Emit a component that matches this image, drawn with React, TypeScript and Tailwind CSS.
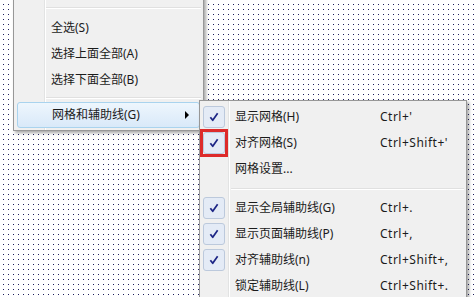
import React from 'react';

const FONT = { fontFamily: '"Noto Sans", "Noto Sans CJK SC", sans-serif' };

function Check() {
  return (
    <svg width="22" height="22" viewBox="0 0 22 22">
      <path d="M7 11.2 L9.6 14.6 L15 6.8" fill="none" stroke="#1c2585" strokeWidth="1.9" strokeLinejoin="round" />
    </svg>
  );
}

function CheckBox({ marked }: { marked?: boolean }) {
  return (
    <div className="relative ml-px w-[22px] h-[22px]">
      <div className="w-full h-full rounded-[3px] border border-[#bcc9dc] bg-[#e4ebf6] flex items-center justify-center">
        <Check />
      </div>
      {marked && <div className="absolute -inset-[3px] border-[3px] border-[#dd2b2b]" />}
    </div>
  );
}

function Separator({ left, top, bottom }: { left: string; top: string; bottom: string }) {
  return (
    <div className={`${top} ${bottom}`}>
      <div className={`${left} h-px bg-[#e0e0e0]`} />
      <div className={`${left} h-px bg-white`} />
    </div>
  );
}

const subItems = [
  { label: '显示网格(H)', key: "Ctrl+'", check: true },
  { label: '对齐网格(S)', key: "Ctrl+Shift+'", check: true, marked: true },
  { label: '网格设置...', key: '' },
  null,
  { label: '显示全局辅助线(G)', key: 'Ctrl+.', check: true },
  { label: '显示页面辅助线(P)', key: 'Ctrl+,', check: true },
  { label: '对齐辅助线(n)', key: 'Ctrl+Shift+,', check: true },
  { label: '锁定辅助线(L)', key: 'Ctrl+Shift+.' },
];

export default function App() {
  return (
    <div className="relative w-[475px] h-[297px] overflow-hidden bg-white text-[12px] text-[#1b1b1b]" style={FONT}>
      <svg className="absolute inset-0" width="475" height="297">
        <defs>
          <pattern id="dots" x="0" y="0" width="5" height="5" patternUnits="userSpaceOnUse">
            <rect x="3" y="4" width="1" height="1" fill="#1e1e5c" />
          </pattern>
        </defs>
        <rect width="475" height="297" fill="url(#dots)" />
      </svg>

      {/* main context menu */}
      <div className="absolute left-[13px] top-[-6px] w-[191px] border border-[#979797] bg-[#f0f0f0] p-[2px] shadow-[2px_2px_3px_rgba(0,0,0,0.35)]">
        <div className="absolute left-[30px] top-0 bottom-0 w-[2px] border-l border-[#e2e3e3] border-r-white" style={{ borderRightWidth: 1 }} />
        <div className="relative flex flex-col">
          <Separator left="ml-[30px]" top="pt-[10px]" bottom="pb-[6px]" />
          <div className="h-[26px] flex items-center pl-[35px]">全选(S)</div>
          <div className="h-[26px] flex items-center pl-[35px]">选择上面全部(A)</div>
          <div className="h-[26px] flex items-center pl-[35px]">选择下面全部(B)</div>
          <Separator left="ml-[30px]" top="pt-[4px]" bottom="pb-[3px]" />
          <div className="h-[26px] mx-px flex items-center justify-between pl-[34px] pr-[10px] rounded-[3px] border border-[#a9d3ee] bg-gradient-to-b from-[#eef6fd] to-[#d9e9f9]">
            <span>网格和辅助线(G)</span>
            <span className="w-0 h-0 border-y-[4px] border-y-transparent border-l-[4px] border-l-black" />
          </div>
        </div>
      </div>

      {/* submenu */}
      <div className="absolute left-[199px] top-[100px] w-[268px] h-[220px] border border-[#979797] bg-[#f0f0f0] px-[2px] pt-[3px] shadow-[2px_2px_3px_rgba(0,0,0,0.35)]">
        <div className="absolute left-[28px] top-0 bottom-0 w-[2px] border-l border-[#e2e3e3] border-r-white" style={{ borderRightWidth: 1 }} />
        <div className="relative flex flex-col">
          {subItems.map((it, i) =>
            it === null ? (
              <Separator key={i} left="ml-[29px]" top="pt-[6px]" bottom="pb-[5px]" />
            ) : (
              <div key={i} className="h-[26px] grid grid-cols-[33px_145px_1fr] items-center">
                <div>{it.check && <CheckBox marked={it.marked} />}</div>
                <span>{it.label}</span>
                <span className="tracking-[0.5px]">{it.key}</span>
              </div>
            )
          )}
        </div>
      </div>
    </div>
  );
}
